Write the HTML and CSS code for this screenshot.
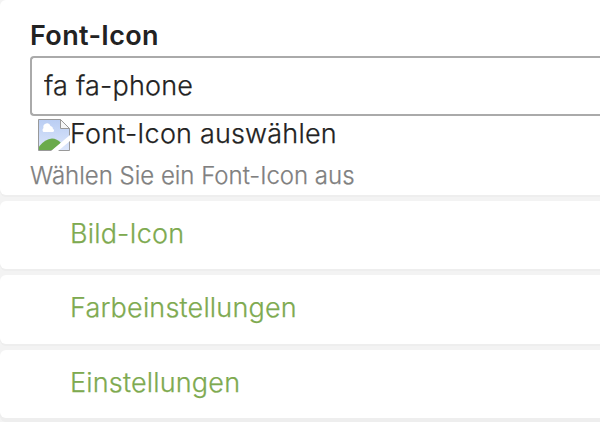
FILE: index.html
```html
<!DOCTYPE html>
<html lang="de">
<head>
    <meta charset="UTF-8">
    <title>Font-Icon</title>
    <link rel="stylesheet" href="styles.css">
</head>
<body>

<div class="page">
    <div class="box widget">
        <label class="widget-label" for="icon">Font-Icon</label>
        <input class="widget-input" type="text" id="icon" value="fa fa-phone">
        <div class="picker">
            <svg class="picker-icon" width="32" height="32" viewBox="0 0 32 32">
                <defs>
                    <linearGradient id="sky" x1="0" y1="0" x2="0" y2="1">
                        <stop offset="0" stop-color="#b9cdf3"/>
                        <stop offset="1" stop-color="#dde7fb"/>
                    </linearGradient>
                </defs>
                <path d="M0.5 0.5H22.5L31.5 9.5V31.5H0.5Z" fill="url(#sky)" stroke="#999" stroke-width="1"/>
                <path d="M5.5 13a2.5 2.5 0 0 1 0-4a3.5 3.5 0 0 1 7-2a3 3 0 0 1 2.5 3a1.6 1.6 0 0 1 0 3z" fill="#fff"/>
                <path d="M1 31V27.5Q7 20 14 19.5Q19 19.5 23 24L15 31Z" fill="#6bab4c"/>
                <path d="M13 32L32 16V22L20 32Z" fill="#fff"/>
                <path d="M22.5 0.5V9.5H31.5Z" fill="#f6f6f6" stroke="#999" stroke-width="1"/>
            </svg>
            <span>Font-Icon auswählen</span>
        </div>
        <p class="tip">Wählen Sie ein Font-Icon aus</p>
    </div>

    <div class="box legend">Bild-Icon</div>
    <div class="box legend">Farbeinstellungen</div>
    <div class="box legend">Einstellungen</div>
</div>

</body>
</html>
```
FILE: styles.css
```css
body {
    margin: 0;
    background-color: #fff;
    font-family: Inter, sans-serif;
    font-size: 27px;
    font-weight: 300;
    letter-spacing: 0.18px;
    -webkit-text-stroke: 0.25px;
    color: #222;
}
.page {
    padding-bottom: 4px;
    background-color: #f3f3f3;
}
.box {
    box-sizing: border-box;
    background-color: #fff;
    border-radius: 6px 0 0 6px;
    box-shadow: 0 2px 0 #eee;
    margin-bottom: 6px;
}
.box:last-child {
    margin-bottom: 0;
    box-shadow: 0 4px 0 #eee;
}
.widget {
    height: 195px;
    padding: 18px 0 0 30px;
}
.widget-label {
    display: block;
    height: 38px;
    line-height: 36px;
    font-weight: 600;
    letter-spacing: 0.35px;
    -webkit-text-stroke: 0;
}
.widget-input {
    display: block;
    box-sizing: border-box;
    width: 100%;
    height: 60px;
    padding: 0 12px 2px;
    border: 2px solid #aaa;
    border-right: none;
    border-radius: 4px 0 0 4px;
    font: inherit;
    letter-spacing: 0.2px;
    color: #222;
}
.picker {
    display: flex;
    height: 36px;
    padding: 3px 0 0 8px;
    line-height: 30px;
}
.tip {
    margin: 0;
    font-size: 24px;
    line-height: 42px;
    letter-spacing: -0.02px;
    color: #808080;
}
.legend {
    height: 68.4px;
    padding-left: 70px;
    line-height: 66px;
    color: #7eaa50;
}
```
